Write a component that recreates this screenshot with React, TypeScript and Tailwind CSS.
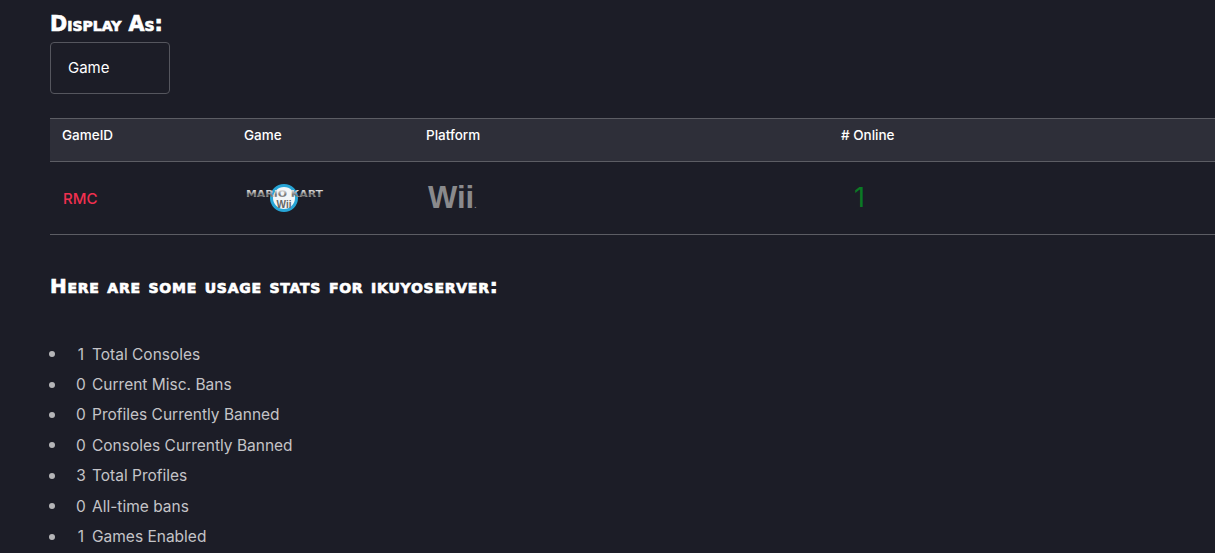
import React from 'react';

const STATS = [
  { count: 1, label: 'Total Consoles' },
  { count: 0, label: 'Current Misc. Bans' },
  { count: 0, label: 'Profiles Currently Banned' },
  { count: 0, label: 'Consoles Currently Banned' },
  { count: 3, label: 'Total Profiles' },
  { count: 0, label: 'All-time bans' },
  { count: 1, label: 'Games Enabled' },
];

const HEADING = "font-['DejaVu_Sans'] font-bold text-white [font-variant:small-caps] [-webkit-text-stroke:0.7px_white]";

const MarioKartWiiLogo = () => (
  <svg width="80" height="32" viewBox="0 0 80 32" aria-label="Mario Kart Wii" className="block">
    <defs>
      <linearGradient id="chrome" x1="0" y1="0" x2="0" y2="1">
        <stop offset="0" stopColor="#e4e4e4" />
        <stop offset="0.55" stopColor="#6f6f6f" />
        <stop offset="1" stopColor="#bdbdbd" />
      </linearGradient>
    </defs>
    <circle cx="39" cy="16" r="12.5" fill="#f2f6f8" stroke="#27a5d6" strokeWidth="3" />
    <text x="39" y="26" textAnchor="middle" fontFamily="Liberation Sans" fontWeight="700" fontSize="10" fill="#666">
      Wii
    </text>
    <text x="1" y="15" fontFamily="DejaVu Sans" fontWeight="700" fontSize="8" fill="url(#chrome)" textLength="77" lengthAdjust="spacingAndGlyphs">
      MARIO KART
    </text>
  </svg>
);

export default function App() {
  return (
    <div className="h-[553px] overflow-hidden bg-[#1c1d27] pl-[50px] pt-[11px] font-['Inter',sans-serif]">
      <h2 className={`${HEADING} text-[20.7px] leading-[26px]`}>Display As:</h2>
      <div className="mt-[5px] flex h-[52px] w-[120px] items-center rounded-[4px] border border-[#55565e] pl-[17px] text-[15px] text-white">
        Game
      </div>

      <table className="mt-6 w-full table-fixed border-collapse">
        <thead>
          <tr className="h-[43px] border-y border-[#5c5d64] bg-[#2e2f39] text-left align-top text-[13.5px] text-white">
            <th className="w-[182px] pl-3 pt-[6px] font-medium">GameID</th>
            <th className="w-[182px] pl-3 pt-[6px] font-medium">Game</th>
            <th className="w-[415px] pl-3 pt-[6px] font-medium">Platform</th>
            <th className="pl-3 pt-[6px] font-medium"># Online</th>
          </tr>
        </thead>
        <tbody>
          <tr className="h-[73px] border-b border-[#5c5d64]">
            <td className="pl-[13px] pt-[2px] text-[15px] font-medium text-[#f0304f]">RMC</td>
            <td className="pl-[13px]">
              <MarioKartWiiLogo />
            </td>
            <td className="pl-[14px] pt-px font-['Liberation_Sans'] text-[31px] font-bold text-[#8a8a8c]">
              Wii<span className="text-[8px]">.</span>
            </td>
            <td className="pl-[25px] text-[27px] font-normal text-[#0a7a24]">1</td>
          </tr>
        </tbody>
      </table>

      <h2 className={`${HEADING} mt-[38px] text-[20px] leading-[26px] tracking-[0.75px]`}>
        Here are some usage stats for ikuyoserver:
      </h2>

      <ul className="mt-[40px] text-[15.5px] text-[#c4c4c8]">
        {STATS.map((stat) => (
          <li key={stat.label} className="-ml-px flex h-[30.4px] items-center">
            <span className="mr-[15px] size-[6px] rounded-full bg-[#b5b5b8]" />
            <span className="w-[22px] text-center">{stat.count}</span>
            {stat.label}
          </li>
        ))}
      </ul>
    </div>
  );
}
